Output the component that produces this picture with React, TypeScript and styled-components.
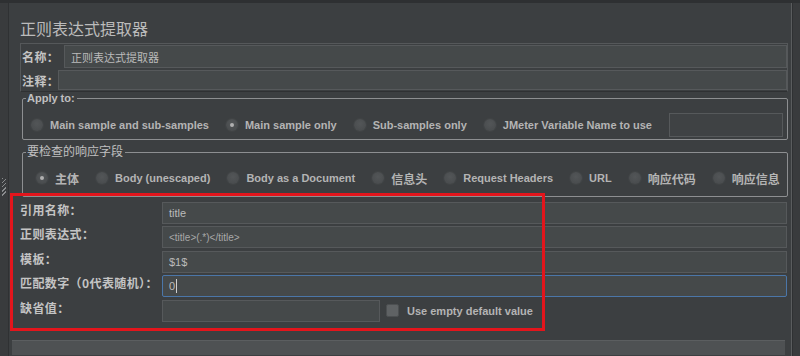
import styled, { createGlobalStyle } from "styled-components";

const GlobalStyle = createGlobalStyle`
  html, body {
    margin: 0;
    padding: 0;
    background: #3c3f41;
  }
  body {
    font-family: "Liberation Sans", "Noto Sans CJK SC", sans-serif;
    color: #bbbbbb;
  }
`;

const Frame = styled.div`
  position: relative;
  display: flex;
  width: 800px;
  height: 356px;
  overflow: hidden;
  background: #3c3f41;
  border-top: 3px solid #2e3032;
  box-sizing: border-box;
`;

const SideStrip = styled.div<{ $right?: boolean }>`
  width: ${(p) => (p.$right ? "7px" : "8px")};
  flex: none;
  background: #393b3d;
  border-left: ${(p) => (p.$right ? "1px solid #2f3133" : "none")};
  border-right: ${(p) => (p.$right ? "none" : "1px solid #2f3133")};
  display: flex;
  align-items: flex-start;
  justify-content: center;
`;

const Grip = styled.div`
  margin-top: 175px;
  width: 4px;
  height: 18px;
  background: repeating-linear-gradient(
    135deg,
    #8a8c8e 0 1px,
    transparent 1px 3px
  );
`;

const Panel = styled.div`
  flex: 1;
  min-width: 0;
  padding: 0 3px 0 11px;
  border-right: 1px solid #5a5c5e;
  display: flex;
  flex-direction: column;
`;

const Title = styled.div`
  margin: 15px 0 5px;
  font-size: 16px;
  line-height: 20px;
  color: #bbbbbb;
  font-family: "Noto Sans CJK SC", sans-serif;
`;

const NameBox = styled.div`
  border: 1px solid #55585a;
  border-bottom-color: #2f3133;
  display: flex;
  flex-direction: column;
`;

const NameRow = styled.div<{ $h: number; $labelW: number }>`
  display: grid;
  grid-template-columns: ${(p) => p.$labelW}px 1fr;
  height: ${(p) => p.$h}px;
  align-items: center;
  padding: 1px 0;
`;

const Label = styled.span`
  font-family: "Noto Sans CJK SC", sans-serif;
  font-size: 12px;
  font-weight: 700;
  letter-spacing: 0.4px;
  color: #c4c4c4;
  padding-left: 1px;
  white-space: nowrap;
`;

const TextBox = styled.div<{ $focus?: boolean; $small?: boolean; $w?: number }>`
  box-sizing: border-box;
  height: 100%;
  width: ${(p) => (p.$w ? `${p.$w}px` : "auto")};
  background: #45494a;
  border: 1px solid ${(p) => (p.$focus ? "#4b76a8" : "#56595b")};
  border-radius: ${(p) => (p.$focus ? "2px" : "0")};
  padding: 0 6px;
  display: flex;
  align-items: center;
  font-size: ${(p) => (p.$small ? "10px" : "11px")};
  color: ${(p) => (p.$small ? "#a8a8a8" : "#bbbbbb")};
  font-family: "Liberation Sans", "Noto Sans CJK SC", sans-serif;
  white-space: nowrap;
`;

const NameText = styled.span`
  font-family: "Noto Sans CJK SC", sans-serif;
  font-size: 11px;
`;

const Caret = styled.span`
  display: inline-block;
  width: 1px;
  height: 14px;
  background: #d0d0d0;
  margin-left: 1px;
`;

const Group = styled.fieldset<{ $padL: number; $padT: number; $padB: number; $top: number }>`
  margin: ${(p) => p.$top}px 0 0 2px;
  padding: ${(p) => `${p.$padT}px 4px ${p.$padB}px ${p.$padL}px`};
  border: 1px solid #8d8f91;
  border-radius: 2px;
  min-width: 0;
`;

const Legend = styled.legend<{ $cjk?: boolean; $shift: number }>`
  padding: 0 2px 0 1px;
  margin-left: ${(p) => p.$shift}px;
  font-size: ${(p) => (p.$cjk ? "12px" : "11px")};
  line-height: ${(p) => (p.$cjk ? "14px" : "12px")};
  font-weight: ${(p) => (p.$cjk ? 400 : 700)};
  font-family: "Liberation Sans", "Noto Sans CJK SC", sans-serif;
  color: #c0c0c0;
`;

const RadioRow = styled.div<{ $gap: number }>`
  display: flex;
  align-items: center;
  height: 24px;
  gap: ${(p) => p.$gap}px;
`;

const RadioItem = styled.label`
  display: flex;
  align-items: center;
  gap: 7px;
  font-size: 11px;
  font-weight: 700;
  color: #b4b4b4;
  white-space: nowrap;
`;

const RadioDot = styled.span<{ $on?: boolean }>`
  position: relative;
  flex: none;
  width: 12px;
  height: 12px;
  border-radius: 50%;
  background: radial-gradient(circle at 50% 40%, #535658, #46494b);
  box-shadow: 0 0 0 1px #414446;
  &::after {
    content: "";
    display: ${(p) => (p.$on ? "block" : "none")};
    position: absolute;
    left: 4px;
    top: 4px;
    width: 4px;
    height: 4px;
    border-radius: 50%;
    background: #b0b0b0;
  }
`;

const CjkText = styled.span`
  font-family: "Noto Sans CJK SC", sans-serif;
  font-size: 12px;
  font-weight: 700;
`;

const VarInput = styled.div`
  margin-left: auto;
  width: 116px;
  height: 24px;
  box-sizing: border-box;
  background: #3f4244;
  border: 1px solid #56595b;
`;

const Fields = styled.div`
  display: grid;
  grid-template-columns: 142px 1fr;
  grid-auto-rows: 22px;
  row-gap: 2.4px;
  margin-top: 5px;
  padding-right: 1px;
`;

const FieldLabel = styled(Label)`
  align-self: start;
  line-height: 16px;
  padding-left: 0;
`;

const DefaultRow = styled.div`
  display: flex;
  align-items: center;
  gap: 6px;
  height: 100%;
`;

const CheckBox = styled.span`
  width: 11px;
  height: 11px;
  border-radius: 2px;
  background: #5f6264;
  border: 1px solid #4c4f51;
`;

const CheckLabel = styled.span`
  font-size: 11px;
  font-weight: 700;
  color: #b4b4b4;
  margin-left: 2px;
`;

const BottomBar = styled.div`
  margin: 18px 3px 0 -8px;
  height: 14px;
  background: #4e5153;
  border-top: 1px solid #5b5e60;
`;

const Highlight = styled.div`
  position: absolute;
  left: 10px;
  top: 190px;
  width: 535px;
  height: 138px;
  border: 3px solid #e3151c;
  box-sizing: border-box;
  pointer-events: none;
`;

const applyTo = [
  { text: "Main sample and sub-samples", on: false },
  { text: "Main sample only", on: true },
  { text: "Sub-samples only", on: false },
  { text: "JMeter Variable Name to use", on: false },
];

const fieldsToCheck = [
  { text: "主体", on: true, cjk: true },
  { text: "Body (unescaped)", on: false },
  { text: "Body as a Document", on: false },
  { text: "信息头", on: false, cjk: true },
  { text: "Request Headers", on: false },
  { text: "URL", on: false },
  { text: "响应代码", on: false, cjk: true },
  { text: "响应信息", on: false, cjk: true },
];

export default function App() {
  return (
    <>
      <GlobalStyle />
      <Frame>
        <SideStrip>
          <Grip />
        </SideStrip>
        <Panel>
          <Title>正则表达式提取器</Title>
          <NameBox>
            <NameRow $h={23} $labelW={43}>
              <Label>名称：</Label>
              <TextBox>
                <NameText>正则表达式提取器</NameText>
              </TextBox>
            </NameRow>
            <NameRow $h={20} $labelW={37}>
              <Label>注释：</Label>
              <TextBox />
            </NameRow>
          </NameBox>

          <Group $padL={8} $padT={9} $padB={2} $top={0}>
            <Legend $shift={-5}>Apply to:</Legend>
            <RadioRow $gap={17}>
              {applyTo.map((r) => (
                <RadioItem key={r.text}>
                  <RadioDot $on={r.on} />
                  {r.text}
                </RadioItem>
              ))}
              <VarInput />
            </RadioRow>
          </Group>

          <Group $padL={13} $padT={7} $padB={6} $top={5}>
            <Legend $cjk $shift={-10}>要检查的响应字段</Legend>
            <RadioRow $gap={17}>
              {fieldsToCheck.map((r) => (
                <RadioItem key={r.text}>
                  <RadioDot $on={r.on} />
                  {r.cjk ? <CjkText>{r.text}</CjkText> : r.text}
                </RadioItem>
              ))}
            </RadioRow>
          </Group>

          <Fields>
            <FieldLabel>引用名称：</FieldLabel>
            <TextBox>title</TextBox>
            <FieldLabel>正则表达式：</FieldLabel>
            <TextBox $small>{"<title>(.*)</title>"}</TextBox>
            <FieldLabel>模板：</FieldLabel>
            <TextBox>$1$</TextBox>
            <FieldLabel>匹配数字（0代表随机）：</FieldLabel>
            <TextBox $focus>
              0<Caret />
            </TextBox>
            <FieldLabel>缺省值：</FieldLabel>
            <DefaultRow>
              <TextBox $w={218} />
              <CheckBox />
              <CheckLabel>Use empty default value</CheckLabel>
            </DefaultRow>
          </Fields>

          <BottomBar />
        </Panel>
        <SideStrip $right />
        <Highlight />
      </Frame>
    </>
  );
}
